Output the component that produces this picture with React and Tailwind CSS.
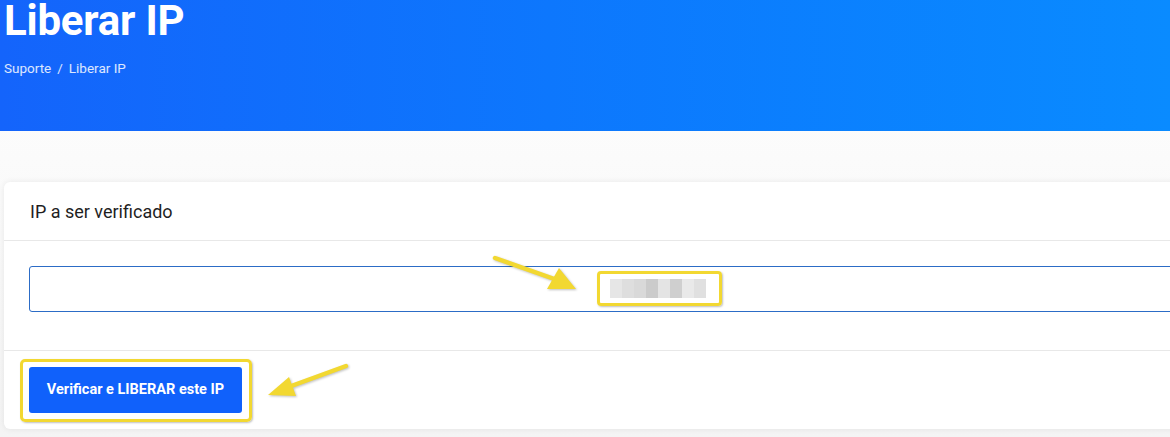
export default function App() {
  const cells = ["#e6e6e6", "#dedede", "#d9d9d9", "#cbcbcb", "#e4e4e4", "#cfcfcf", "#e9e9e9", "#e0e0e0"];
  return (
    <div className="w-[1170px] h-[437px] overflow-hidden bg-gradient-to-b from-white to-[#f4f4f4]" style={{ fontFamily: "Roboto, 'Liberation Sans', sans-serif" }}>
      <div className="h-[131px] bg-gradient-to-r from-[#1464fb] to-[#0a8bff] pl-[4px] overflow-hidden">
        <h1 className="text-white font-bold text-[42px] leading-[42px] mt-[0px] tracking-[-0.2px]">Liberar IP</h1>
        <div className="mt-[18px] text-[13.5px] leading-[16px] text-white/85 flex gap-[6px]">
          <span>Suporte</span>
          <span>/</span>
          <span>Liberar IP</span>
        </div>
      </div>
      <div className="relative ml-[4px] mt-[51px] w-[1200px] bg-white rounded-[6px] shadow-[0_0_6px_rgba(0,0,0,0.08)]">
        <div className="h-[59px] flex items-center pl-[26px] border-b border-[#e8e8e8]">
          <span className="text-[18px] text-[#1f1f1f] font-normal">IP a ser verificado</span>
        </div>
        <div className="pt-[25px] pb-[38px] pl-[25px] border-b border-[#e8e8e8]">
          <div className="h-[46px] border border-[#2c6cc6] rounded-[3px] bg-white"></div>
        </div>
        <div className="pt-[16px] pb-[16px] pl-[25px]">
          <button className="w-[213px] h-[46px] rounded-[3px] bg-[#1061fb] text-white font-bold text-[14.5px]">Verificar e LIBERAR este IP</button>
        </div>

        {/* blurred IP highlight */}
        <div className="absolute left-[593px] top-[89px] w-[125px] h-[35px] border-[3px] border-[#f2d831] rounded-[4px] shadow-[1px_1px_2px_rgba(0,0,0,0.25)] flex items-center pl-[10px]">
          <div className="flex h-[19px]">
            {cells.map((c, i) => (
              <div key={i} className="w-[12px] h-full" style={{ background: c }}></div>
            ))}
          </div>
        </div>
        {/* button highlight */}
        <div className="absolute left-[16px] top-[177px] w-[232px] h-[63px] border-[3px] border-[#f2d831] rounded-[5px] shadow-[1px_1px_2px_rgba(0,0,0,0.25)]"></div>

        <svg className="absolute left-[480px] top-[70px]" width="110" height="45" viewBox="0 0 110 45">
          <g style={{ filter: "drop-shadow(1px 1px 1px rgba(0,0,0,0.25))" }}>
            <line x1="11" y1="6" x2="76" y2="29" stroke="#f2d831" strokeWidth="4.5" strokeLinecap="round" />
            <polygon points="92,37 63,37 75,16" fill="#f2d831" />
          </g>
        </svg>
        <svg className="absolute left-[255px] top-[178px] w-[100px] h-[40px]" viewBox="0 0 100 40">
          <g style={{ filter: "drop-shadow(1px 1px 1px rgba(0,0,0,0.25))" }}>
            <line x1="87" y1="6" x2="24" y2="29" stroke="#f2d831" strokeWidth="4.5" strokeLinecap="round" />
            <polygon points="9,35 30,17 37,36" fill="#f2d831" />
          </g>
        </svg>
      </div>
    </div>
  );
}
